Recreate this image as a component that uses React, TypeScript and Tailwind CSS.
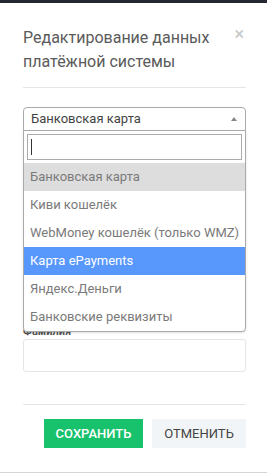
import React from "react";

const options = [
  { label: "Банковская карта", state: "selected" },
  { label: "Киви кошелёк", state: "" },
  { label: "WebMoney кошелёк (только WMZ)", state: "" },
  { label: "Карта ePayments", state: "active" },
  { label: "Яндекс.Деньги", state: "" },
  { label: "Банковские реквизиты", state: "" },
];

const App: React.FC = () => {
  return (
    <div className="w-[267px] h-[473px] bg-white overflow-hidden font-['Roboto',sans-serif] flex flex-col">
      <div className="h-[3px] bg-[#232833]" />
      <div className="flex-1 flex flex-col pl-[23px] pr-[21px] border-b border-[#d6d6d6]">
        <div className="flex justify-between pt-[23px]">
          <h2 className="text-[16px] leading-[24px] text-[#5a5a5a] w-[190px]">
            Редактирование данных платёжной системы
          </h2>
          <span className="text-[18px] leading-[18px] text-[#c8c8c8] -mt-[1px] mr-[2px]">×</span>
        </div>
        <div className="h-px bg-[#e5e5e5] mt-[13px]" />

        <div className="relative mt-[19px] z-10">
          <div className="h-[24px] border border-[#aaa] rounded-t-[4px] flex items-center justify-between pl-[7px] pr-[8px]">
            <span className="text-[13px] text-[#444]">Банковская карта</span>
            <span className="w-0 h-0 border-l-[3px] border-r-[3px] border-b-[4px] border-l-transparent border-r-transparent border-b-[#888]" />
          </div>
          <div className="absolute left-0 right-0 top-[23px] bg-white border border-[#aaa] rounded-b-[4px] shadow-sm">
            <div className="p-[3px]">
              <div className="h-[26px] border border-[#aaa] flex items-center pl-[3px]">
                <span className="w-px h-[16px] bg-[#333]" />
              </div>
            </div>
            {options.map((o) => (
              <div
                key={o.label}
                className={
                  "h-[28px] flex items-center pl-[6px] text-[13px] " +
                  (o.state === "selected"
                    ? "bg-[#ddd] text-[#7a7a7a]"
                    : o.state === "active"
                    ? "bg-[#5897fb] text-white"
                    : "text-[#7a7a7a]")
                }
              >
                {o.label}
              </div>
            ))}
          </div>
        </div>

        <div className="mt-[195px]">
          <label className="block text-[11px] leading-[12px] font-bold text-[#555]">Фамилия</label>
          <div className="h-[33px] border border-[#e5e5e5] rounded-[3px] mt-[1px]" />
        </div>
        <div className="h-px bg-[#e5e5e5] mt-[32px]" />
        <div className="flex justify-end gap-[9px] mt-[14px]">
          <button className="w-[99px] h-[29px] bg-[#18c26c] text-white text-[13px] font-medium">
            СОХРАНИТЬ
          </button>
          <button className="w-[94px] h-[29px] bg-[#f2f5f7] text-[#444] text-[13px]">
            ОТМЕНИТЬ
          </button>
        </div>
      </div>
    </div>
  );
};

export default App;
